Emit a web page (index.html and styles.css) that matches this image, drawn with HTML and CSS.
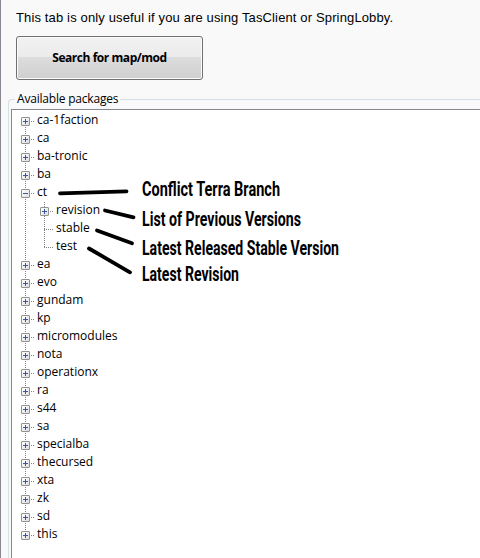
FILE: index.html
```html
<!DOCTYPE html>
<html lang="en">
<head>
<meta charset="utf-8">
<title>Packages</title>
<link rel="stylesheet" href="styles.css">
</head>
<body>
<main class="tab">
  <p class="intro">This tab is only useful if you are using TasClient or SpringLobby.</p>
  <button class="search" type="button"><span>Search for map/mod</span></button>
  <section class="group">
    <h2 class="legend">Available packages</h2>
    <div class="pane">
      <ul class="tree">
        <li class="node"><i class="box plus"></i><span>ca-1faction</span></li>
        <li class="node"><i class="box plus"></i><span>ca</span></li>
        <li class="node"><i class="box plus"></i><span>ba-tronic</span></li>
        <li class="node"><i class="box plus"></i><span>ba</span></li>
        <li class="node"><i class="box"></i><span>ct</span></li>
        <li class="branch">
          <ul class="subtree">
            <li class="node"><i class="box plus"></i><span>revision</span></li>
            <li class="node leaf"><span>stable</span></li>
            <li class="node leaf"><span>test</span></li>
          </ul>
        </li>
        <li class="node"><i class="box plus"></i><span>ea</span></li>
        <li class="node"><i class="box plus"></i><span>evo</span></li>
        <li class="node"><i class="box plus"></i><span>gundam</span></li>
        <li class="node"><i class="box plus"></i><span>kp</span></li>
        <li class="node"><i class="box plus"></i><span>micromodules</span></li>
        <li class="node"><i class="box plus"></i><span>nota</span></li>
        <li class="node"><i class="box plus"></i><span>operationx</span></li>
        <li class="node"><i class="box plus"></i><span>ra</span></li>
        <li class="node"><i class="box plus"></i><span>s44</span></li>
        <li class="node"><i class="box plus"></i><span>sa</span></li>
        <li class="node"><i class="box plus"></i><span>specialba</span></li>
        <li class="node"><i class="box plus"></i><span>thecursed</span></li>
        <li class="node"><i class="box plus"></i><span>xta</span></li>
        <li class="node"><i class="box plus"></i><span>zk</span></li>
        <li class="node"><i class="box plus"></i><span>sd</span></li>
        <li class="node"><i class="box plus"></i><span>this</span></li>
      </ul>
    </div>
  </section>
  <svg class="notes" width="480" height="558" viewBox="0 0 480 558">
    <g class="pointers">
      <path d="M60 193.3L126.5 191.4"/>
      <path d="M105 210.5L133.5 217.3"/>
      <path d="M97 230.5L132 243.3"/>
      <path d="M89 248.5L130 272.3"/>
    </g>
    <g class="captions" lengthAdjust="spacingAndGlyphs">
      <text x="142" y="196" textLength="138" lengthAdjust="spacingAndGlyphs">Conflict Terra Branch</text>
      <text x="142" y="226" textLength="159" lengthAdjust="spacingAndGlyphs">List of Previous Versions</text>
      <text x="142" y="255" textLength="197" lengthAdjust="spacingAndGlyphs">Latest Released Stable Version</text>
      <text x="142" y="281" textLength="97" lengthAdjust="spacingAndGlyphs">Latest Revision</text>
    </g>
  </svg>
</main>
</body>
</html>
```
FILE: styles.css
```css
* { box-sizing: border-box; }
body { margin: 0; background: #f9f9f9; color: #000; overflow: hidden; }
ul { list-style: none; margin: 0; padding: 0; }

.tab {
  position: relative;
  display: flex;
  flex-direction: column;
  height: 558px;
  border-left: 1px solid #8b8791;
}
.intro {
  margin: 9px 0 0 15px;
  font: 13px/18px "Liberation Sans", sans-serif;
  letter-spacing: 0.14px;
  white-space: nowrap;
}
.search {
  width: 187px;
  height: 44px;
  margin: 9px 0 0 15px;
  padding: 0;
  border: 1px solid #707070;
  border-radius: 3px;
  box-shadow: inset 0 0 0 1px #fbfbfb;
  background: linear-gradient(#f2f2f2 0, #ebebeb 48%, #dddddd 48%, #cfcfcf 100%);
  color: #000;
  font: bold 12px/16px "Open Sans", sans-serif;
  letter-spacing: -0.45px;
}
.group {
  flex: 1;
  display: flex;
  flex-direction: column;
  margin: 19px 0 0 7px;
  border: 1px solid #d5dfe5;
  border-width: 1px 0 0 1px;
  border-radius: 4px 0 0 0;
}
.legend {
  align-self: flex-start;
  margin: -9px 0 0 6px;
  padding: 0 2px;
  background: #f9f9f9;
  font: 12px/16px "Open Sans", sans-serif;
  letter-spacing: -0.2px;
}
.pane {
  flex: 1;
  margin: 2px 0 0 2px;
  border: 1px solid #828790;
  border-width: 1px 0 0 1px;
  background: #fff;
}
.tree {
  --dots: repeating-linear-gradient(#808080 0 1px, transparent 1px 2px);
  margin: 2px 0 0 9px;
  background: var(--dots) 4px 9px / 1px 414px no-repeat;
  font: 12px/18px "Open Sans", sans-serif;
}
.node { display: flex; align-items: center; height: 18px; }
.node span { margin-top: -3px; }
.box {
  width: 9px;
  height: 9px;
  border: 1px solid #919191;
  border-radius: 1px;
  background:
    linear-gradient(#3b579d, #3b579d) center / 5px 1px no-repeat,
    linear-gradient(135deg, #fff, #dedede);
}
.plus {
  background:
    linear-gradient(#3b579d, #3b579d) center / 5px 1px no-repeat,
    linear-gradient(#3b579d, #3b579d) center / 1px 5px no-repeat,
    linear-gradient(135deg, #fff, #dedede);
}
.box::after {
  content: "";
  display: block;
  width: 3px;
  height: 1px;
  margin: 3px 0 0 9px;
  background: repeating-linear-gradient(90deg, #808080 0 1px, transparent 1px 2px);
}
.box + span { margin-left: 7px; }
.subtree {
  margin-left: 19px;
  background: var(--dots) 4px 0 / 1px 46px no-repeat;
}
.leaf::before {
  content: "";
  width: 9px;
  height: 1px;
  margin: 0 3px 0 4px;
  background: repeating-linear-gradient(90deg, #808080 0 1px, transparent 1px 2px);
}
.notes { position: absolute; top: 0; left: -1px; }
.pointers { stroke: #000; stroke-width: 3.8; stroke-linecap: round; }
.captions { font: bold 20px Roboto, sans-serif; }
```
